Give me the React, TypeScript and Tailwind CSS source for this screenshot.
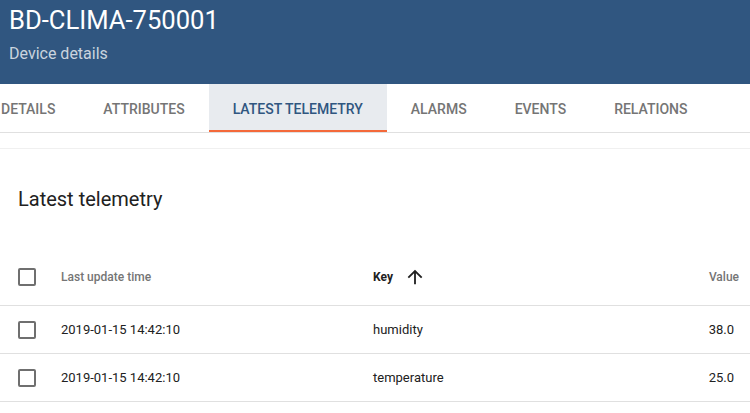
import React from "react";

const tabs = ["Details", "Attributes", "Latest telemetry", "Alarms", "Events", "Relations"];

const rows = [
  { time: "2019-01-15 14:42:10", key: "humidity", value: "38.0" },
  { time: "2019-01-15 14:42:10", key: "temperature", value: "25.0" },
];

const Checkbox = () => (
  <div className="w-[18px] h-[18px] rounded-[2px] border-2 border-[#6f6f6f] bg-white" />
);

const ArrowUp = () => (
  <svg width="22" height="22" viewBox="0 0 24 24" fill="#212121">
    <path d="M4 12l1.41 1.41L11 7.83V20h2V7.83l5.58 5.59L20 12l-8-8-8 8z" />
  </svg>
);

export default function App() {
  return (
    <div
      className="w-[750px] h-[413px] overflow-hidden bg-white"
      style={{ fontFamily: "Roboto, 'Liberation Sans', sans-serif" }}
    >
      {/* Header */}
      <div className="h-[84px] bg-[#305680] px-[9px] pt-[3px]">
        <div className="text-[25.6px] leading-[34px] text-white">BD-CLIMA-750001</div>
        <div className="mt-[7px] text-[16px] leading-[20px] text-white/75">Device details</div>
      </div>

      {/* Tabs */}
      <div className="h-[49px] border-b border-[#e0e0e0] overflow-hidden">
        <div className="flex -ml-[23px] h-full">
          {tabs.map((t) => {
            const active = t === "Latest telemetry";
            return (
              <div
                key={t}
                className={
                  active
                    ? "h-full px-[24px] flex items-center bg-[#e8ebef] border-b-2 border-[#f4693a] text-[#305680] text-[14px] font-medium uppercase pt-[5px]"
                    : "h-full px-[24px] flex items-center border-b-2 border-transparent text-[#757575] text-[14px] font-medium uppercase pt-[5px]"
                }
              >
                {t}
              </div>
            );
          })}
        </div>
      </div>

      {/* Card */}
      <div className="mt-[15px] border-t border-[#f0f0f0]">
        <div className="h-[99px] flex items-center px-[18px]">
          <div className="text-[20px] text-[#212121]">Latest telemetry</div>
        </div>

        <div className="h-[58px] flex items-center border-b border-[#e0e0e0] text-[12px] font-medium pt-[1px]">
          <div className="w-[61px] pl-[18px]">
            <Checkbox />
          </div>
          <div className="w-[312px] text-[#757575]">Last update time</div>
          <div className="flex-1 flex items-center gap-[11px] text-[#212121] font-bold">
            Key
            <ArrowUp />
          </div>
          <div className="pr-[11px] text-[#757575]">Value</div>
        </div>

        {rows.map((r) => (
          <div
            key={r.key}
            className="h-[48px] flex items-center border-b border-[#e0e0e0] text-[13px] text-[#212121]"
          >
            <div className="w-[61px] pl-[18px]">
              <Checkbox />
            </div>
            <div className="w-[312px]">{r.time}</div>
            <div className="flex-1">{r.key}</div>
            <div className="pr-[16px]">{r.value}</div>
          </div>
        ))}
      </div>
    </div>
  );
}
